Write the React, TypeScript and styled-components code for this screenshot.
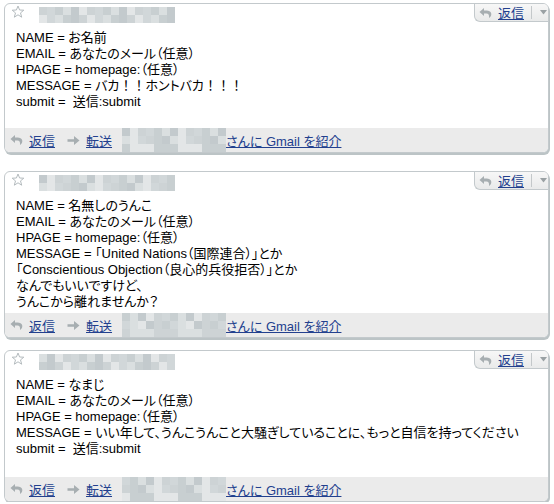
import React from "react";
import styled, { createGlobalStyle } from "styled-components";

const GlobalStyle = createGlobalStyle`
  body {
    margin: 0;
    background: #ffffff;
    font-family: "Liberation Sans", "Noto Sans CJK JP", sans-serif;
  }
`;

const LINK = "#22408e";

const Page = styled.div`
  width: 554px;
  padding: 3px 5px 0 4px;
  box-sizing: border-box;
  display: flex;
  flex-direction: column;
`;

const Card = styled.div<{ $gap: number }>`
  margin-bottom: ${p => p.$gap}px;
  border: 1px solid #c3c9cc;
  border-radius: 6px;
  box-shadow: 1px 2px 0 #bcc4c6;
  background: #ffffff;
  overflow: hidden;
  display: flex;
  flex-direction: column;
`;

const CardHeader = styled.div`
  height: 20px;
  display: flex;
  align-items: flex-start;
`;

const StarIcon = styled.svg`
  margin: 1px 0 0 6px;
  flex: none;
`;

const HeaderMosaic = styled.svg`
  margin: 3px 0 0 14px;
  flex: none;
`;

const ReplyBox = styled.div`
  margin-left: auto;
  height: 18px;
  width: 74px;
  box-sizing: border-box;
  display: flex;
  align-items: center;
  padding-left: 4px;
  border-left: 1px solid #c3c9cc;
  border-bottom: 1px solid #c3c9cc;
  border-bottom-left-radius: 6px;
  background: linear-gradient(#f7f7f7, #e9eaea);
`;

const Separator = styled.span`
  width: 1px;
  height: 13px;
  background: #c4c8ca;
  margin: 0 8px 0 7px;
`;

const Body = styled.div<{ $min: number }>`
  min-height: ${p => p.$min}px;
  box-sizing: border-box;
  padding: 6px 11px 2px;
  font-size: 13px;
  line-height: 16px;
  color: #000000;
  font-feature-settings: "palt";
  white-space: pre;
`;

const FullWidth = styled.span`
  font-feature-settings: normal;
`;

const Footer = styled.div`
  height: 24px;
  background: #ebebeb;
  display: flex;
  align-items: center;
  padding-left: 5px;
  gap: 12px;
`;

const Action = styled.span`
  display: inline-flex;
  align-items: center;
  gap: 6px;
`;

const Link = styled.a<{ $lead?: number }>`
  font-size: 13px;
  margin-left: ${p => p.$lead ?? 0}px;
  color: ${LINK};
  text-decoration: underline;
  font-feature-settings: "palt";
  cursor: pointer;
`;

const FooterMosaic = styled.svg`
  flex: none;
  margin: 0 -12px 0 -2px;
`;

const shades = ["#d1d7d9", "#c8cfd1", "#dadfe0", "#c3cacd", "#e3e6e7", "#cdd3d5"];

const Mosaic: React.FC<{
  cols: number;
  rows: number;
  cell: number;
  seed: number;
  as?: typeof HeaderMosaic;
}> = ({ cols, rows, cell, seed, as: Wrap = HeaderMosaic }) => {
  const cells = [];
  for (let r = 0; r < rows; r++) {
    for (let c = 0; c < cols; c++) {
      const k = (c * 7 + r * 11 + seed * 5 + ((c * r) % 3)) % shades.length;
      cells.push(
        <rect key={`${r}-${c}`} x={c * cell} y={r * cell} width={cell} height={cell} fill={shades[k]} />,
      );
    }
  }
  return (
    <Wrap width={cols * cell} height={rows * cell} viewBox={`0 0 ${cols * cell} ${rows * cell}`}>
      {cells}
    </Wrap>
  );
};

const Star = () => (
  <StarIcon width="14" height="14" viewBox="0 0 14 14">
    <path
      d="M7 1 L8.6 5 L12.8 5.2 L9.5 7.9 L10.7 12.2 L7 9.8 L3.3 12.2 L4.5 7.9 L1.2 5.2 L5.4 5 Z"
      fill="#ffffff"
      stroke="#b4bbbe"
      strokeWidth="1"
      strokeLinejoin="round"
    />
  </StarIcon>
);

const ReplyIcon = () => (
  <svg width="13" height="12" viewBox="0 0 13 12">
    <path
      d="M5 1 L0.5 5 L5 9 V6.6 H7.4 C9.4 6.6 10.4 8 10 11 C12 9.6 12.6 8 12.2 6.2 C11.7 4.2 9.8 3.4 7.6 3.4 H5 Z"
      fill="#a7aeb1"
    />
  </svg>
);

const ForwardIcon = () => (
  <svg width="13" height="11" viewBox="0 0 13 11">
    <path d="M0.5 4.2 H7 V1 L12.5 5.5 L7 10 V6.8 H0.5 Z" fill="#a7aeb1" />
  </svg>
);

const Caret = () => (
  <svg width="7" height="5" viewBox="0 0 7 5">
    <path d="M0 0 H7 L3.5 4.5 Z" fill="#9aa1a4" />
  </svg>
);

// keep fullwidth exclamation marks at their full advance, like the original font
const renderLine = (line: string, i: number) => (
  <div key={i}>
    {line.split(/(！+)/).map((part, j) =>
      part.startsWith("！") ? <FullWidth key={j}>{part}</FullWidth> : part,
    )}
  </div>
);

interface MessageProps {
  lines: string[];
  seed: number;
  gap: number;
  bodyMin: number;
}

const Message: React.FC<MessageProps> = ({ lines, seed, gap, bodyMin }) => (
  <Card $gap={gap}>
    <CardHeader>
      <Star />
      <Mosaic cols={17} rows={2} cell={8} seed={seed} />
      <ReplyBox>
        <ReplyIcon />
        <Link $lead={6}>返信</Link>
        <Separator />
        <Caret />
      </ReplyBox>
    </CardHeader>
    <Body $min={bodyMin}>{lines.map(renderLine)}</Body>
    <Footer>
      <Action>
        <ReplyIcon />
        <Link>返信</Link>
      </Action>
      <Action>
        <ForwardIcon />
        <Link>転送</Link>
      </Action>
      <Mosaic as={FooterMosaic} cols={13} rows={3} cell={8} seed={seed + 2} />
      <Link>さんに Gmail を紹介</Link>
    </Footer>
  </Card>
);

const messages: MessageProps[] = [
  {
    seed: 1,
    gap: 18,
    bodyMin: 104,
    lines: [
      "NAME = お名前",
      "EMAIL = あなたのメール（任意）",
      "HPAGE = homepage:（任意）",
      "MESSAGE = バカ！！ホントバカ！！！",
      "submit =  送信:submit",
    ],
  },
  {
    seed: 3,
    gap: 12,
    bodyMin: 121,
    lines: [
      "NAME = 名無しのうんこ",
      "EMAIL = あなたのメール（任意）",
      "HPAGE = homepage:（任意）",
      "MESSAGE = 「United Nations（国際連合）」とか",
      "「Conscientious Objection（良心的兵役拒否）」とか",
      "なんでもいいですけど、",
      "うんこから離れませんか？",
    ],
  },
  {
    seed: 4,
    gap: 0,
    bodyMin: 106,
    lines: [
      "NAME = なまじ",
      "EMAIL = あなたのメール（任意）",
      "HPAGE = homepage:（任意）",
      "MESSAGE = いい年して、うんこうんこと大騒ぎしていることに、もっと自信を持ってください",
      "submit =  送信:submit",
    ],
  },
];

const App: React.FC = () => (
  <>
    <GlobalStyle />
    <Page>
      {messages.map(m => (
        <Message key={m.seed} {...m} />
      ))}
    </Page>
  </>
);

export default App;
